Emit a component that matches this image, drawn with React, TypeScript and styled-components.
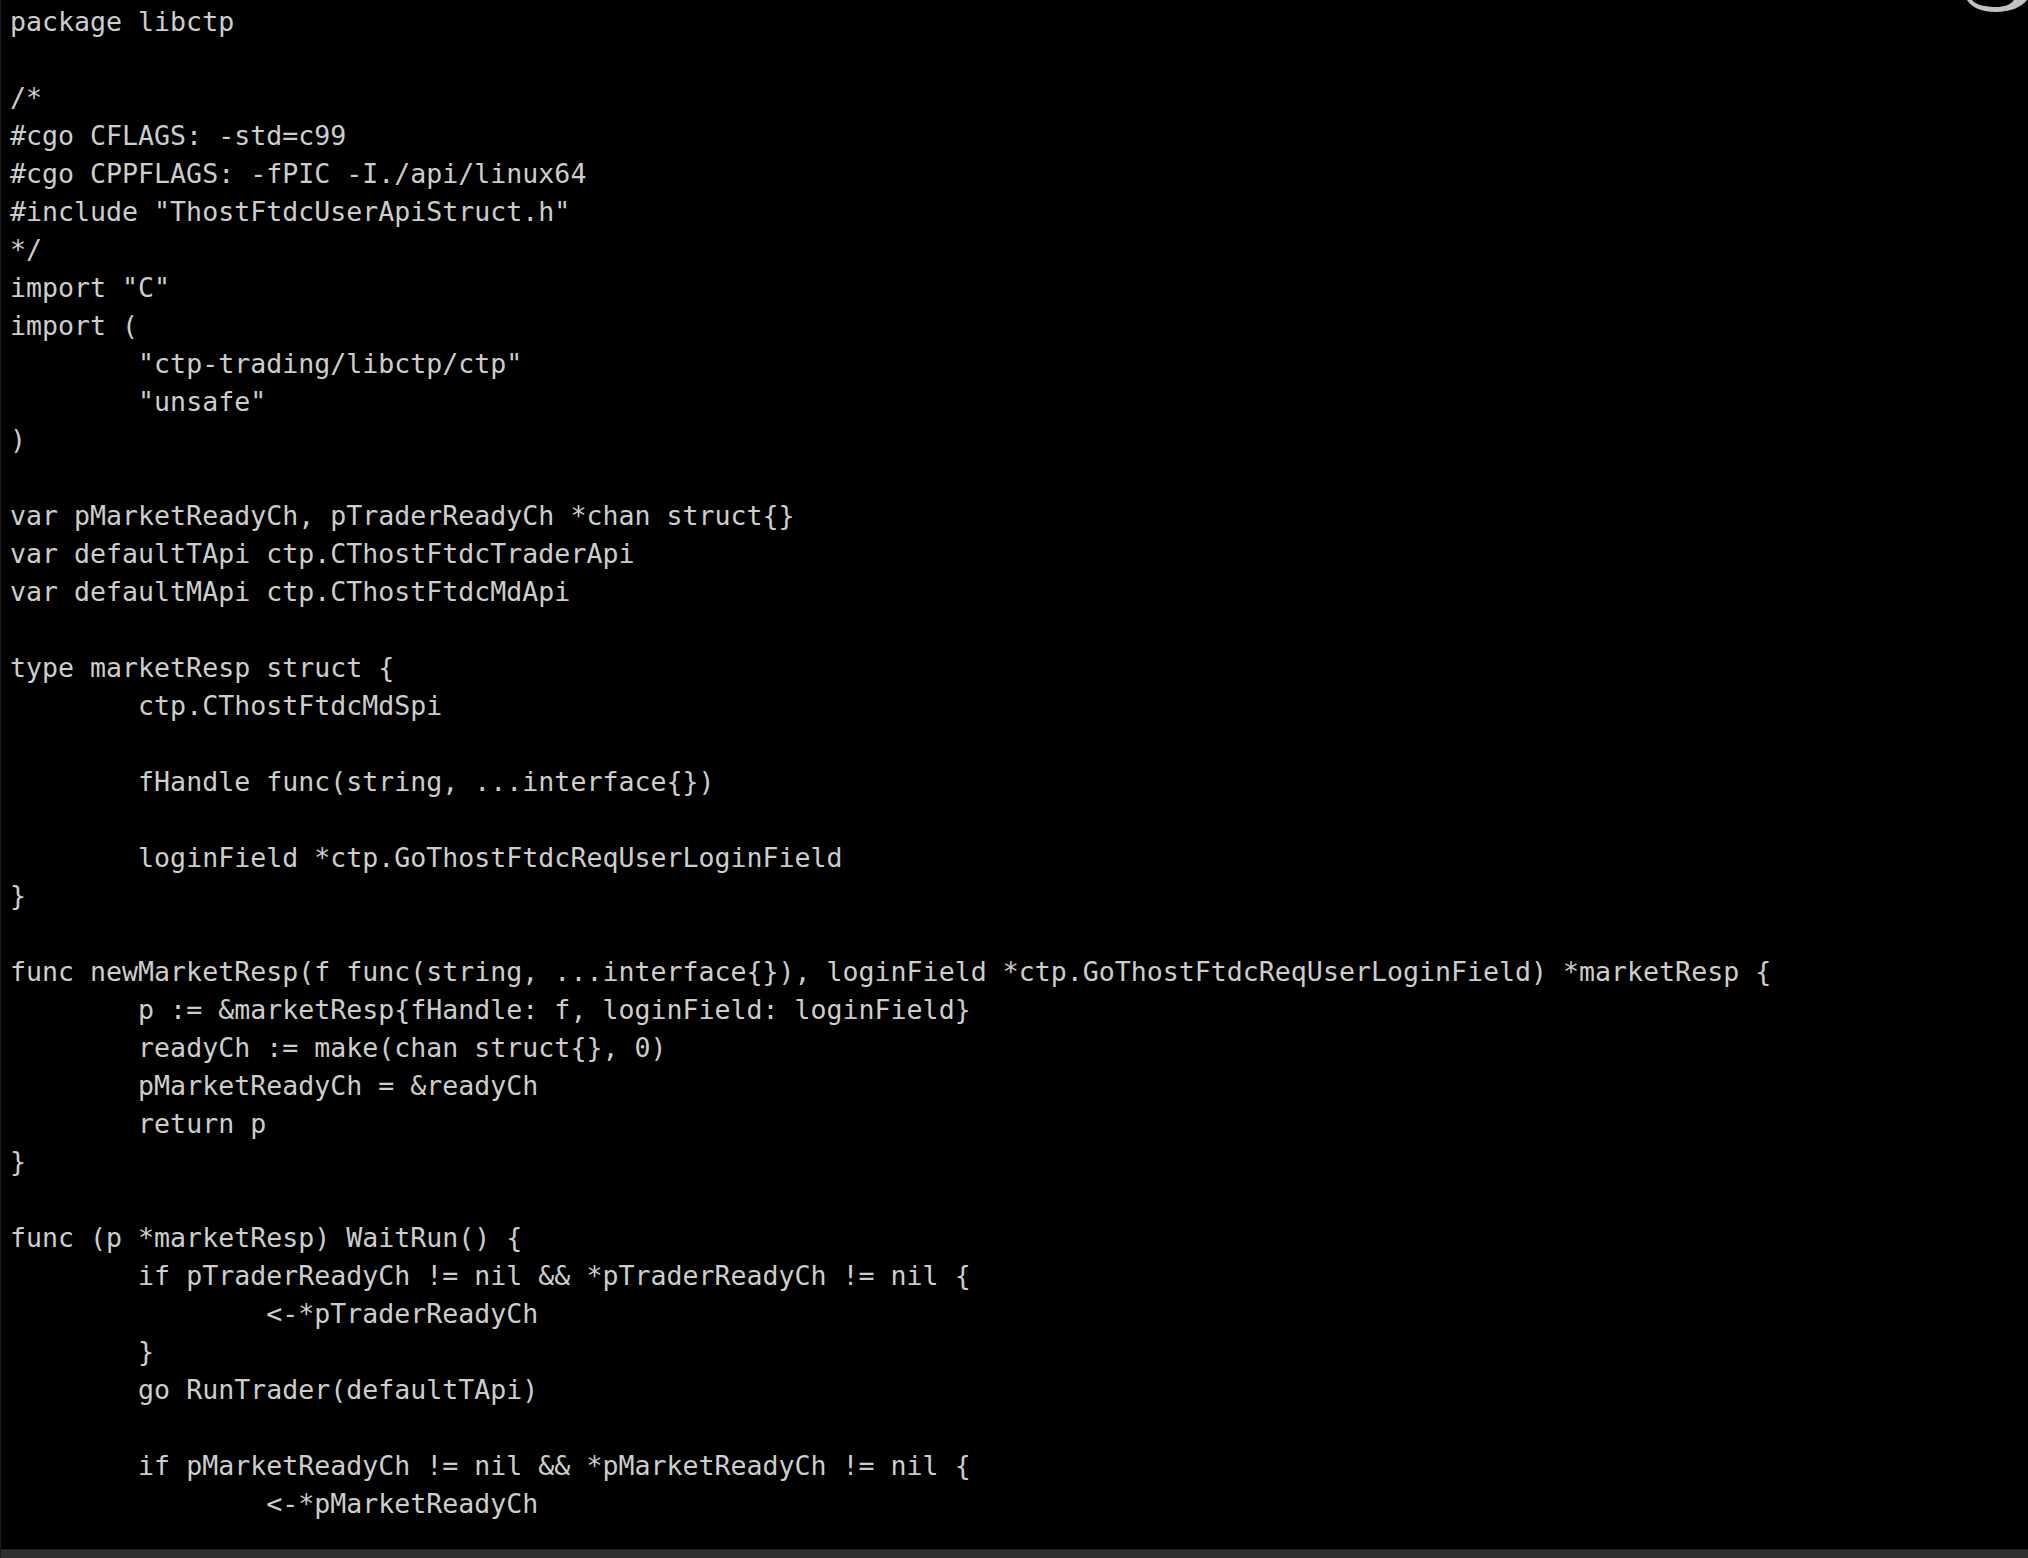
import React from "react";
import styled, { createGlobalStyle } from "styled-components";

const Global = createGlobalStyle`
  html, body { margin: 0; padding: 0; background: #000; }
  body { width: 2028px; height: 1558px; overflow: hidden; }
`;

const Window = styled.div`
  position: relative;
  width: 2028px;
  height: 1558px;
  display: flex;
  flex-direction: column;
  background: #000;
  border-left: 1px solid #1c1c1c;
  box-sizing: border-box;
  overflow: hidden;
`;

const Screen = styled.div`
  flex: 1;
  overflow: hidden;
  padding: 3px 0 0 9px;
  font-family: "DejaVu Sans Mono", "Liberation Mono", monospace;
  font-size: 26.6px;
  line-height: 38px;
  color: #cdcdcd;
  tab-size: 8;
  -moz-tab-size: 8;
`;

const Line = styled.div`
  white-space: pre;
  height: 38px;
`;

const StatusBar = styled.div`
  height: 8px;
  flex: none;
  background: #2f2f2f;
  border-top: 1px solid #242424;
`;

const Badge = styled.svg`
  position: absolute;
  top: 0;
  right: 0;
  width: 70px;
  height: 16px;
`;

const code = `package libctp

/*
#cgo CFLAGS: -std=c99
#cgo CPPFLAGS: -fPIC -I./api/linux64
#include "ThostFtdcUserApiStruct.h"
*/
import "C"
import (
\t"ctp-trading/libctp/ctp"
\t"unsafe"
)

var pMarketReadyCh, pTraderReadyCh *chan struct{}
var defaultTApi ctp.CThostFtdcTraderApi
var defaultMApi ctp.CThostFtdcMdApi

type marketResp struct {
\tctp.CThostFtdcMdSpi

\tfHandle func(string, ...interface{})

\tloginField *ctp.GoThostFtdcReqUserLoginField
}

func newMarketResp(f func(string, ...interface{}), loginField *ctp.GoThostFtdcReqUserLoginField) *marketResp {
\tp := &marketResp{fHandle: f, loginField: loginField}
\treadyCh := make(chan struct{}, 0)
\tpMarketReadyCh = &readyCh
\treturn p
}

func (p *marketResp) WaitRun() {
\tif pTraderReadyCh != nil && *pTraderReadyCh != nil {
\t\t<-*pTraderReadyCh
\t}
\tgo RunTrader(defaultTApi)

\tif pMarketReadyCh != nil && *pMarketReadyCh != nil {
\t\t<-*pMarketReadyCh`;

export default function App() {
  const lines = code.split("\n");
  return (
    <>
      <Global />
      <Window>
        <Screen>
          {lines.map((l, i) => (
            <Line key={i}>{l}</Line>
          ))}
        </Screen>
        <StatusBar />
        <Badge viewBox="0 0 70 16">
          <path
            d="M 9 0 C 14 8, 24 12, 38 12 C 52 12, 64 7, 69 0 L 56 0 C 52 5, 46 7, 38 7 C 28 7, 18 5, 14 0 Z"
            fill="#c2c2c2"
          />
        </Badge>
      </Window>
    </>
  );
}
